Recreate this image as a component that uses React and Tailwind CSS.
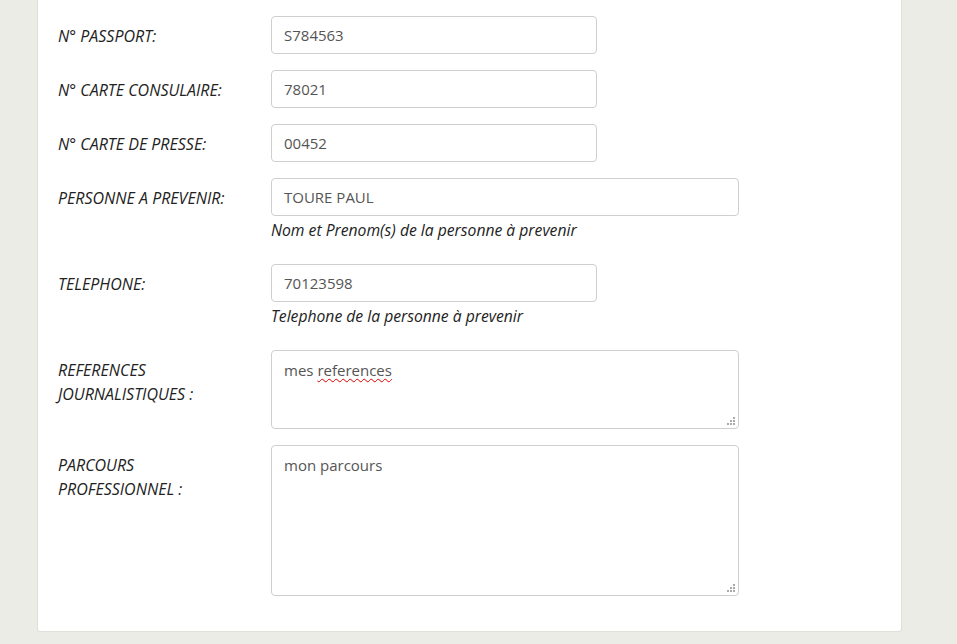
import React from 'react';

const font = { fontFamily: '"Open Sans", "Noto Sans", sans-serif' };

function Row({ label, children }) {
  return (
    <div className="flex mb-4">
      <label className="w-[213px] shrink-0 pt-[8px] pr-[30px] text-[16px] leading-6 italic text-[#222]">
        {label}
      </label>
      <div className="flex flex-col">{children}</div>
    </div>
  );
}

function Input({ value, wide }) {
  return (
    <input
      type="text"
      readOnly
      defaultValue={value}
      className={`${wide ? 'w-[468px]' : 'w-[326px]'} h-[38px] px-3 border border-[#cfcfcf] rounded-[4px] text-[15px] text-[#555] bg-white outline-none`}
    />
  );
}

function Help({ children }) {
  return <p className="mt-1 mb-2 text-[15.7px] leading-5 italic text-[#222]">{children}</p>;
}

function Grip() {
  return (
    <svg className="absolute right-[3px] bottom-[3px]" width="8" height="8" viewBox="0 0 8 8">
      <rect x="6" y="0" width="2" height="2" fill="#aaa" />
      <rect x="3" y="3" width="2" height="2" fill="#aaa" />
      <rect x="6" y="3" width="2" height="2" fill="#aaa" />
      <rect x="0" y="6" width="2" height="2" fill="#aaa" />
      <rect x="3" y="6" width="2" height="2" fill="#aaa" />
      <rect x="6" y="6" width="2" height="2" fill="#aaa" />
    </svg>
  );
}

function Area({ height, children }) {
  return (
    <div
      className={`relative w-[468px] ${height} px-3 py-[7px] border border-[#cfcfcf] rounded-[4px] text-[15px] leading-6 text-[#555] bg-white`}
    >
      {children}
      <Grip />
    </div>
  );
}

export default function App() {
  return (
    <div className="min-h-screen bg-[#ecece6]" style={font}>
      <div className="ml-[37px] w-[865px] bg-white border border-t-0 border-[#e0e0da] rounded-b-[3px] pl-[20px] pt-4 pb-[19px]">
        <Row label="N° PASSPORT:">
          <Input value="S784563" />
        </Row>
        <Row label="N° CARTE CONSULAIRE:">
          <Input value="78021" />
        </Row>
        <Row label="N° CARTE DE PRESSE:">
          <Input value="00452" />
        </Row>
        <Row label="PERSONNE A PREVENIR:">
          <Input value="TOURE PAUL" wide />
          <Help>Nom et Prenom(s) de la personne à prevenir</Help>
        </Row>
        <Row label="TELEPHONE:">
          <Input value="70123598" />
          <Help>Telephone de la personne à prevenir</Help>
        </Row>
        <Row label="REFERENCES JOURNALISTIQUES :">
          <Area height="h-[79px]">
            mes{' '}
            <span className="underline decoration-wavy decoration-[#d00] decoration-1 underline-offset-2">
              references
            </span>
          </Area>
        </Row>
        <Row label="PARCOURS PROFESSIONNEL :">
          <Area height="h-[151px]">mon parcours</Area>
        </Row>
      </div>
    </div>
  );
}
